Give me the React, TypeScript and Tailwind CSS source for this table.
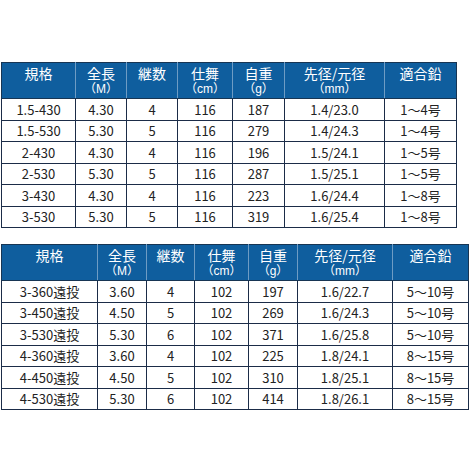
const font = { fontFamily: '"Noto Sans CJK JP", "Noto Sans", sans-serif' }

type Spec = {
  widths: number[]
  rows: string[][]
}

const headers: [string, string?][] = [
  ['規格'],
  ['全長', '（M）'],
  ['継数'],
  ['仕舞', '（cm）'],
  ['自重', '（g）'],
  ['先径/元径', '（mm）'],
  ['適合鉛'],
]

const tables: Spec[] = [
  {
    widths: [74, 51, 51, 55, 52, 100, 72],
    rows: [
      ['1.5-430', '4.30', '4', '116', '187', '1.4/23.0', '1～4号'],
      ['1.5-530', '5.30', '5', '116', '279', '1.4/24.3', '1～4号'],
      ['2-430', '4.30', '4', '116', '196', '1.5/24.1', '1～5号'],
      ['2-530', '5.30', '5', '116', '287', '1.5/25.1', '1～5号'],
      ['3-430', '4.30', '4', '116', '223', '1.6/24.4', '1～8号'],
      ['3-530', '5.30', '5', '116', '319', '1.6/25.4', '1～8号'],
    ],
  },
  {
    widths: [96, 49, 48, 54, 49, 95, 76],
    rows: [
      ['3-360遠投', '3.60', '4', '102', '197', '1.6/22.7', '5～10号'],
      ['3-450遠投', '4.50', '5', '102', '269', '1.6/24.3', '5～10号'],
      ['3-530遠投', '5.30', '6', '102', '371', '1.6/25.8', '5～10号'],
      ['4-360遠投', '3.60', '4', '102', '225', '1.8/24.1', '8～15号'],
      ['4-450遠投', '4.50', '5', '102', '310', '1.8/25.1', '8～15号'],
      ['4-530遠投', '5.30', '6', '102', '414', '1.8/26.1', '8～15号'],
    ],
  },
]

function SpecTable({ widths, rows }: Spec) {
  return (
    <table className="table-fixed border-collapse" style={{ width: widths.reduce((a, b) => a + b, 0) }}>
      <colgroup>
        {widths.map((w, i) => (
          <col key={i} style={{ width: w }} />
        ))}
      </colgroup>
      <thead>
        <tr className="h-[36px] bg-[#0f5e9e]">
          {headers.map(([a, b], i) => (
            <th
              key={i}
              className="border-y border-[#173553] border-x border-x-[#6e9cc4] first:border-l-[#173553] last:border-r-[#173553] pt-[2px] align-top font-normal text-white"
            >
              <div className="text-[14px] leading-[16px]">{a}</div>
              {b && (
                <div className="text-[12px] leading-[16px]" style={{ fontFamily: '"Liberation Sans", "Noto Sans CJK JP", sans-serif' }}>
                  {b}
                </div>
              )}
            </th>
          ))}
        </tr>
      </thead>
      <tbody>
        {rows.map((r, i) => (
          <tr key={i} className="h-[21.5px] bg-white">
            {r.map((c, j) => (
              <td
                key={j}
                className="border border-[#1b2c48] text-center align-middle text-[13px] leading-[15px] text-[#222]"
              >
                {c}
              </td>
            ))}
          </tr>
        ))}
      </tbody>
    </table>
  )
}

export default function App() {
  return (
    <div className="h-[470px] w-[470px] bg-white pl-[1px] pt-[62px]" style={font}>
      <div className="flex flex-col gap-[16px]">
        {tables.map((t, i) => (
          <SpecTable key={i} {...t} />
        ))}
      </div>
    </div>
  )
}
